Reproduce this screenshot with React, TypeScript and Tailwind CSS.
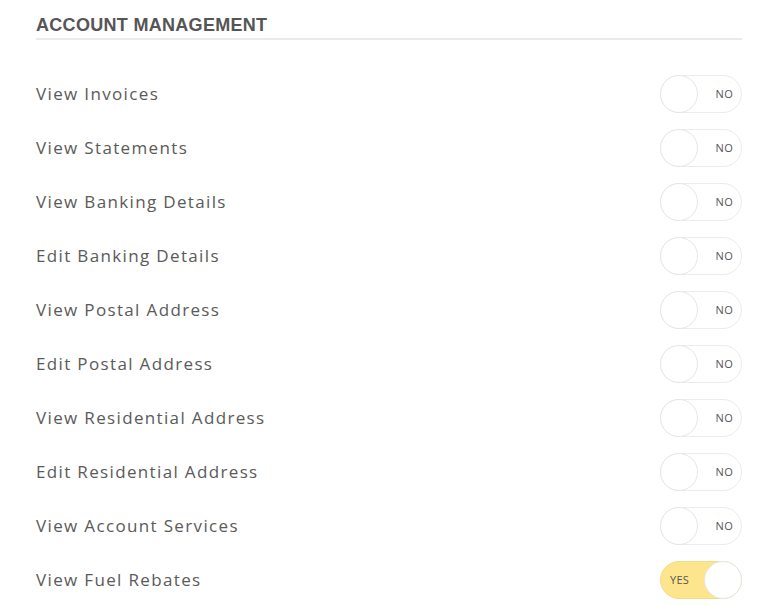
import { useState } from "react";

const PERMISSIONS = [
  { label: "View Invoices", on: false },
  { label: "View Statements", on: false },
  { label: "View Banking Details", on: false },
  { label: "Edit Banking Details", on: false },
  { label: "View Postal Address", on: false },
  { label: "Edit Postal Address", on: false },
  { label: "View Residential Address", on: false },
  { label: "Edit Residential Address", on: false },
  { label: "View Account Services", on: false },
  { label: "View Fuel Rebates", on: true },
];

const Toggle = ({ on, onClick }: { on: boolean; onClick: () => void }) => (
  <button
    onClick={onClick}
    className={`relative flex items-center w-[82px] h-[38px] rounded-full border ${
      on ? "bg-[#fce58c] border-[#f3dc86]" : "bg-white border-[#ececec]"
    }`}
  >
    <span
      className={`absolute top-[-1px] w-[38px] h-[38px] rounded-full bg-white border border-[#e6e6e6] ${
        on ? "right-[-1px]" : "left-[-1px]"
      }`}
    />
    <span
      className={`absolute text-[11px] text-[#555] tracking-[0.3px] ${on ? "left-[9px]" : "right-[8px]"}`}
      style={{ fontFamily: '"Open Sans", sans-serif' }}
    >
      {on ? "YES" : "NO"}
    </span>
  </button>
);

export default function App() {
  const [items, setItems] = useState(PERMISSIONS);

  return (
    <div className="w-[772px] h-[606px] bg-white pl-9 pr-[30px] overflow-hidden">
      {/* 見出し */}
      <div className="pt-[15px] pb-[3px] border-b-2 border-[#ebebeb]">
        <h2
          className="text-[18px] font-bold text-[#555] leading-5 tracking-[0.3px]"
          style={{ fontFamily: '"Liberation Sans", Arial, sans-serif' }}
        >
          ACCOUNT MANAGEMENT
        </h2>
      </div>

      <ul className="pt-[27px]">
        {items.map((item, i) => (
          <li key={item.label} className="flex items-center justify-between h-[54px]">
            <span
              className="text-[17px] text-[#5a5a5a] tracking-[1.35px]"
              style={{ fontFamily: '"Open Sans", sans-serif' }}
            >
              {item.label}
            </span>
            <Toggle
              on={item.on}
              onClick={() =>
                setItems(items.map((it, j) => (j === i ? { ...it, on: !it.on } : it)))
              }
            />
          </li>
        ))}
      </ul>
    </div>
  );
}
